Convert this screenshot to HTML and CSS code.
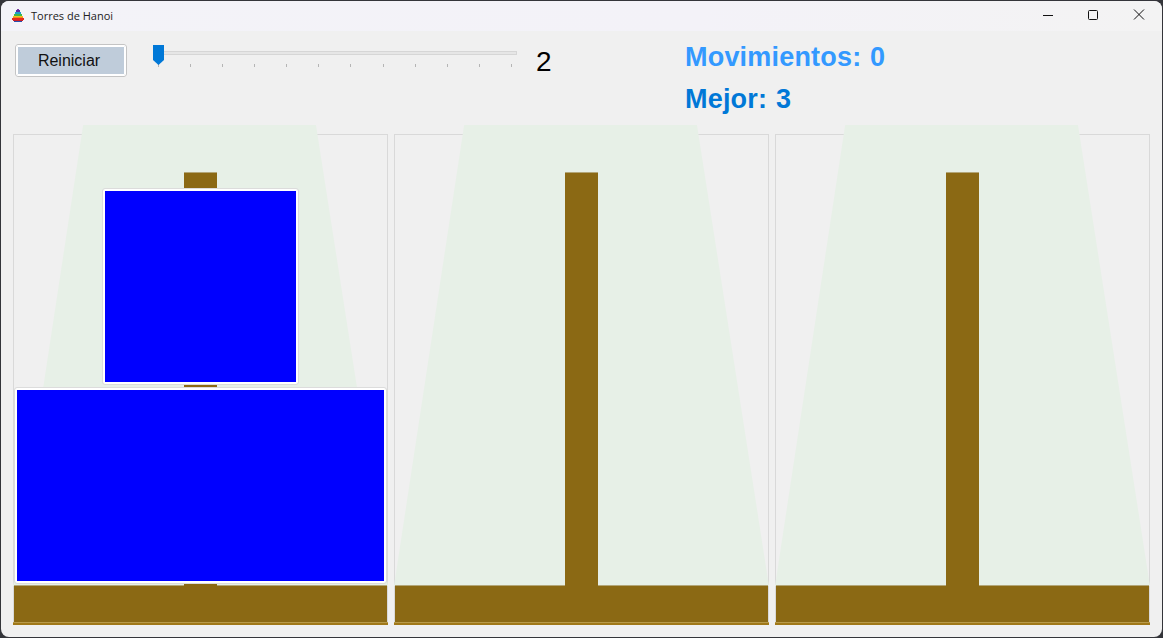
FILE: index.html
```html
<!DOCTYPE html>
<html>
	<head>
		<meta charset="UTF-8">
		<title>Torres de Hanoi</title>
		<link rel="stylesheet" href="styles.css">
	</head>
	<body>
		<div class="window">

			<!--barra de titulo-->
			<div class="titlebar">
				<svg class="app-icon" width="12" height="13" viewBox="0 0 12 13" shape-rendering="crispEdges">
					<rect x="5" y="0" width="2" height="1" fill="#7a3fa0"/>
					<rect x="4" y="1" width="4" height="2" fill="#5a2fa8"/>
					<rect x="3" y="3" width="6" height="2" fill="#1f9fc8"/>
					<rect x="2" y="5" width="8" height="2" fill="#3fb84a"/>
					<rect x="1" y="7" width="10" height="1" fill="#f2c21f"/>
					<rect x="1" y="8" width="10" height="1" fill="#f28a1f"/>
					<rect x="0" y="9" width="12" height="2" fill="#e62a1f"/>
					<rect x="1" y="11" width="10" height="1" fill="#c8202a"/>
					<rect x="2" y="12" width="8" height="1" fill="#2a4fb0"/>
				</svg>
				<span class="title">Torres de Hanoi</span>
				<div class="controls">
					<svg class="ctl" width="46" height="30" viewBox="0 0 46 30"><path d="M19 14.5H29" stroke="#111" fill="none"/></svg>
					<svg class="ctl" width="46" height="30" viewBox="0 0 46 30"><rect x="18.5" y="9.5" width="9" height="9" rx="1" stroke="#111" fill="none"/></svg>
					<svg class="ctl" width="46" height="30" viewBox="0 0 46 30"><path d="M18 8.5L28 18.5M28 8.5L18 18.5" stroke="#111" fill="none"/></svg>
				</div>
			</div>

			<!--controles-->
			<div class="toolbar">
				<button class="restart">Reiniciar</button>
				<div class="slider">
					<div class="track"></div>
					<svg class="thumb" width="11" height="20" viewBox="0 0 11 20"><path d="M0 0H11V15L5.5 20L0 15Z" fill="#0078d7"/></svg>
					<div class="ticks">
						<i></i><i></i><i></i><i></i><i></i><i></i><i></i><i></i><i></i><i></i><i></i><i></i>
					</div>
				</div>
				<div class="level">2</div>
				<div class="stats">
					<div class="moves">Movimientos: 0</div>
					<div class="best">Mejor: 3</div>
				</div>
			</div>

			<!--torres-->
			<div class="towers">
				<div class="tower">
					<div class="glow"></div>
					<div class="stack">
						<div class="pole pole-top"></div>
						<div class="disc disc-small"></div>
						<div class="pole pole-gap"></div>
						<div class="disc disc-big"></div>
						<div class="pole pole-end"></div>
					</div>
					<div class="base"></div>
				</div>
				<div class="tower">
					<div class="glow"></div>
					<div class="stack">
						<div class="pole pole-full"></div>
					</div>
					<div class="base"></div>
				</div>
				<div class="tower">
					<div class="glow"></div>
					<div class="stack">
						<div class="pole pole-full"></div>
					</div>
					<div class="base"></div>
				</div>
			</div>

		</div>
	</body>
</html>
```

FILE: styles.css
```css
*{
	margin: 0;
	padding: 0;
	box-sizing: border-box;
}

html, body{
	height: 100%;
	background-color: #34353a;
	overflow: hidden;
}

.window{
	width: 1161px;
	height: 636px;
	margin: 1px 0 0 1px;
	background-color: #f0f0f0;
	border-radius: 8px;
	overflow: hidden;
	font-family: "Liberation Sans", Arial, sans-serif;
}

/* barra de titulo */
.titlebar{
	height: 30px;
	background: linear-gradient(to right, #f3f3f8, #f3f2f8 60%, #f3f3f3);
	display: flex;
	align-items: center;
	padding-left: 10px;
}

.app-icon{
	margin-right: 8px;
	margin-left: 1px;
	margin-bottom: 1px;
}

.title{
	font-family: "Open Sans", sans-serif;
	font-size: 11px;
	color: #222;
	margin-left: -1px;
	margin-bottom: 2px;
}

.controls{
	margin-left: auto;
	display: flex;
}

.ctl{
	display: block;
}

/* controles */
.toolbar{
	height: 94px;
	display: flex;
	align-items: flex-start;
	padding: 13px 0 0 14px;
}

.restart{
	width: 112px;
	height: 33px;
	padding-right: 4px;
	background-color: #bfccda;
	border: 2px solid #fff;
	outline: 1px solid #c4c4c4;
	outline-offset: -1px;
	box-shadow: inset 0 0 0 1px #fff;
	border-radius: 3px;
	font-family: "Liberation Sans", Arial, sans-serif;
	font-size: 16px;
	color: #111;
}

.slider{
	position: relative;
	width: 370px;
	height: 40px;
	margin-left: 26px;
	padding: 7px 6px 0 5px;
}

.track{
	height: 4px;
	background-color: #e6e6e6;
	border: 1px solid #d6d6d6;
}

.thumb{
	position: absolute;
	left: 0;
	top: 1px;
}

.ticks{
	display: flex;
	justify-content: space-between;
	margin-top: 9px;
	width: 354px;
}

.ticks i{
	display: block;
	width: 1px;
	height: 3px;
	background-color: #b5b5b5;
}

.level{
	width: 149px;
	margin-left: 13px;
	padding-top: 2px;
	font-size: 28px;
	line-height: 32px;
	color: #000;
}

.stats{
	font-weight: bold;
	font-size: 27px;
	letter-spacing: 0.2px;
	word-spacing: 1px;
	line-height: 42px;
	margin-top: -8px;
}

.moves{
	color: #3399ff;
}

.best{
	color: #0078d7;
}

/* torres */
.towers{
	display: flex;
	gap: 6px;
	padding-left: 12px;
	margin-top: 9px;
}

.tower{
	position: relative;
	width: 375px;
	height: 491px;
	border: 1px solid #d9d9d9;
	border-bottom: none;
	display: flex;
	flex-direction: column;
}

.glow{
	position: absolute;
	left: -1px;
	right: -1px;
	top: -10px;
	height: 461px;
	background-color: #e7f0e7;
	clip-path: polygon(18.7% 0, 80.8% 0, 100% 100%, 0 100%);
}

.stack{
	position: relative;
	z-index: 1;
	flex: 1;
	display: flex;
	flex-direction: column;
	align-items: center;
	padding-top: 37px;
}

.pole{
	width: 33px;
	background-color: #8b6914;
}

.pole-top{
	height: 16px;
	border-top: 1px solid #b3a678;
}

.pole-gap{
	height: 2px;
}

.pole-end{
	height: 2px;
	margin-bottom: -1px;
}

.pole-full{
	flex: 1;
	border-top: 1px solid #b3a678;
	margin-bottom: -1px;
}

.disc{
	background-color: #0000ff;
	border: 2px solid #fff;
	outline: 1px solid #dcdcdc;
	border-radius: 2px;
	height: 195px;
	margin: 1px 0;
}

.disc-small{
	width: 195px;
}

.disc-big{
	width: 371px;
}

.base{
	position: relative;
	height: 40px;
	background-color: #8b6914;
	border-top: 1px solid #b3a678;
}

.base::after{
	content: "";
	position: absolute;
	left: -1px;
	right: -1px;
	bottom: 0;
	height: 2px;
	background-color: #a07818;
	border-top: 1px solid #b89a4a;
}
```
